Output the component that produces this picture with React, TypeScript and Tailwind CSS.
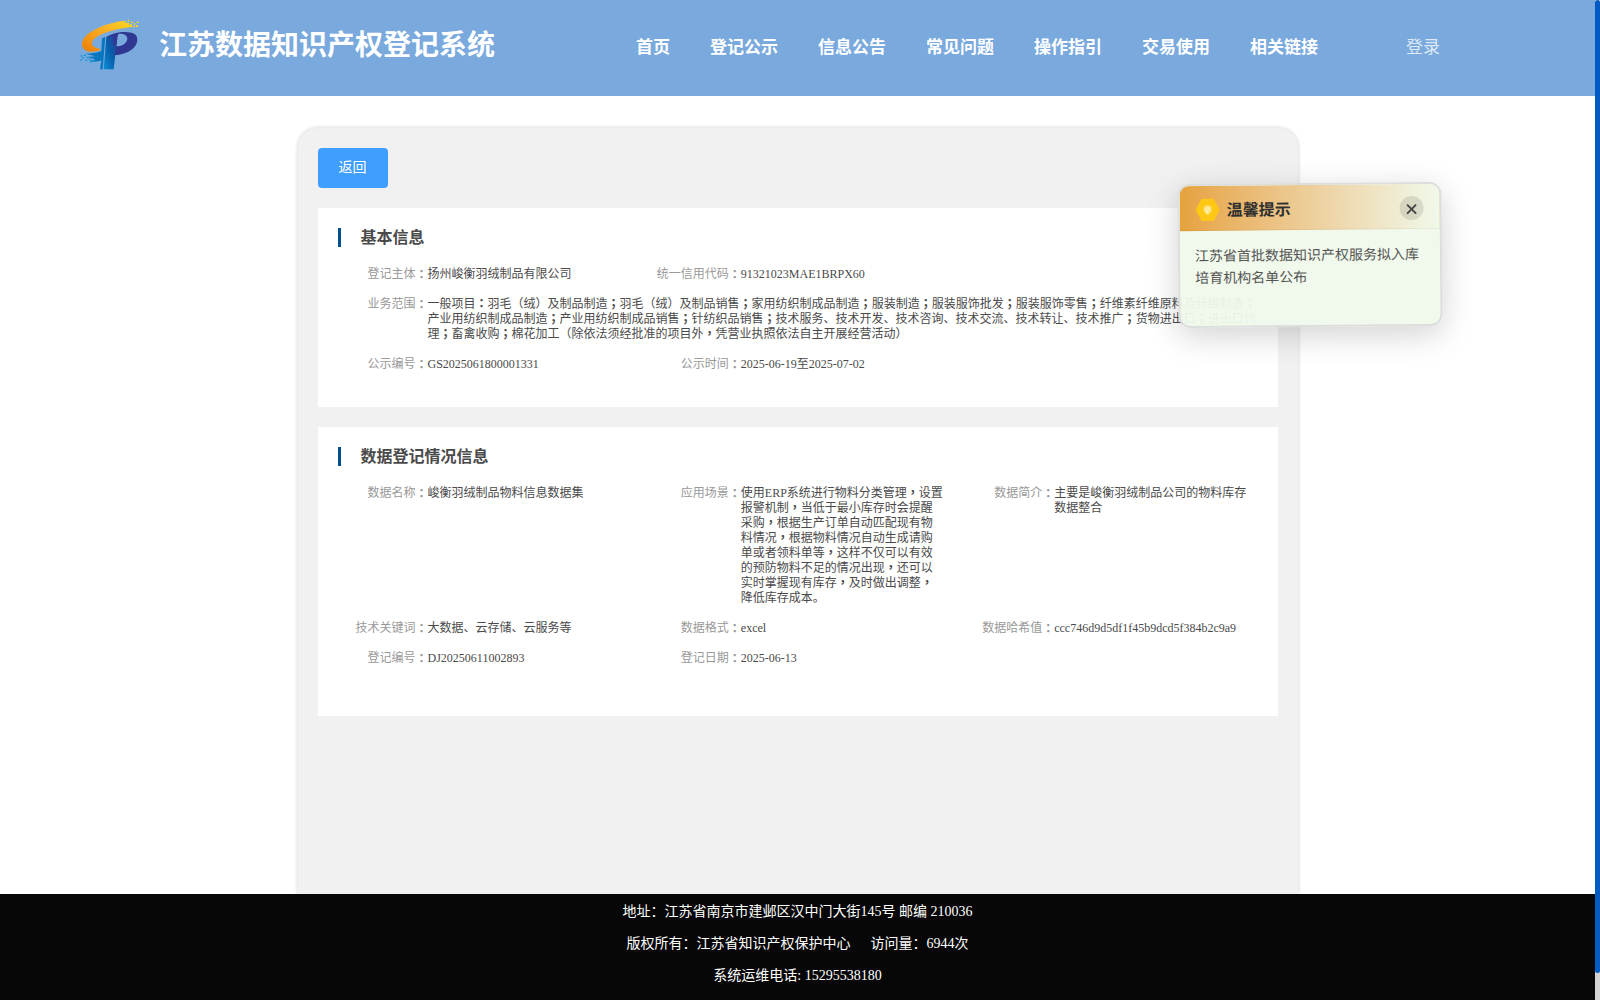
import React from "react";
import { X } from "lucide-react";

const nav = ["首页", "登记公示", "信息公告", "常见问题", "操作指引", "交易使用", "相关链接"];

type Item = { label: string; lines: string[]; wide?: boolean; endsRow?: boolean };

const basic: Item[] = [
  { label: "登记主体", lines: ["扬州峻衡羽绒制品有限公司"] },
  { label: "统一信用代码", lines: ["91321023MAE1BRPX60"], endsRow: true },
  {
    label: "业务范围",
    wide: true,
    lines: [
      "一般项目：羽毛（绒）及制品制造；羽毛（绒）及制品销售；家用纺织制成品制造；服装制造；服装服饰批发；服装服饰零售；纤维素纤维原料及纤维制造；",
      "产业用纺织制成品制造；产业用纺织制成品销售；针纺织品销售；技术服务、技术开发、技术咨询、技术交流、技术转让、技术推广；货物进出口；进出口代",
      "理；畜禽收购；棉花加工（除依法须经批准的项目外，凭营业执照依法自主开展经营活动）",
    ],
  },
  { label: "公示编号", lines: ["GS2025061800001331"] },
  { label: "公示时间", lines: ["2025-06-19至2025-07-02"] },
];

const registration: Item[] = [
  { label: "数据名称", lines: ["峻衡羽绒制品物料信息数据集"] },
  {
    label: "应用场景",
    lines: [
      "使用ERP系统进行物料分类管理，设置",
      "报警机制，当低于最小库存时会提醒",
      "采购，根据生产订单自动匹配现有物",
      "料情况，根据物料情况自动生成请购",
      "单或者领料单等，这样不仅可以有效",
      "的预防物料不足的情况出现，还可以",
      "实时掌握现有库存，及时做出调整，",
      "降低库存成本。",
    ],
  },
  { label: "数据简介", lines: ["主要是峻衡羽绒制品公司的物料库存", "数据整合"] },
  { label: "技术关键词", lines: ["大数据、云存储、云服务等"] },
  { label: "数据格式", lines: ["excel"] },
  { label: "数据哈希值", lines: ["ccc746d9d5df1f45b9dcd5f384b2c9a9"] },
  { label: "登记编号", lines: ["DJ20250611002893"] },
  { label: "登记日期", lines: ["2025-06-13"] },
];

/* Colons, commas and semicolons sit in the middle of their cell. */
function Text({ children }: { children: string }) {
  return (
    <>
      {children.split(/([：；，]+)/).map((part, i) =>
        i % 2 ? (
          <span key={i} lang="zh-TW" className="font-['Noto_Sans_CJK_TC',sans-serif] leading-[0] font-bold">
            {part}
          </span>
        ) : (
          part
        ),
      )}
    </>
  );
}

function Section({ title, items, className }: { title: string; items: Item[]; className: string }) {
  return (
    <section className={`bg-white pt-5 pl-5 ${className}`}>
      <h2 className="flex h-[19px] items-center border-l-3 border-[#00508f] pl-5 text-[16px] font-bold text-[#4a4a4a]">
        {title}
      </h2>
      <dl className="mt-5 grid grid-cols-3 gap-y-[15px] text-[12px] leading-[15px] whitespace-nowrap">
        {items.map((item) => (
          <React.Fragment key={item.label}>
            <div className={item.wide ? "col-span-3 flex" : "flex"}>
              <dt className="flex h-[15px] w-[90px] shrink-0 justify-end text-[#999]">
                <span>{item.label}</span>
                <span className="-mt-px w-3 text-center font-['Noto_Sans_CJK_TC',sans-serif] font-bold" lang="zh-TW">
                  ：
                </span>
              </dt>
              <dd className="text-[#4a4a4a]">
                {item.lines.map((line) => (
                  <p key={line} className="h-[15px]">
                    <Text>{line}</Text>
                  </p>
                ))}
              </dd>
            </div>
            {item.endsRow && <div />}
          </React.Fragment>
        ))}
      </dl>
    </section>
  );
}

function Logo() {
  return (
    <svg viewBox="60 58 180 156" className="h-[52px] w-[60px]">
      <defs>
        <linearGradient id="gold" x1="0" y1="1" x2="1" y2="0">
          <stop offset="0" stopColor="#ee7d05" />
          <stop offset="0.6" stopColor="#f9b127" />
          <stop offset="1" stopColor="#fbd91a" />
        </linearGradient>
        <linearGradient id="stem" x1="0" y1="1" x2="1" y2="0">
          <stop offset="0" stopColor="#0a8fd6" />
          <stop offset="0.5" stopColor="#085fab" />
          <stop offset="1" stopColor="#2b3a98" />
        </linearGradient>
      </defs>
      <path
        d="M190 63C120 74 64 104 66 135C68 150 80 157 96 156L118 153L121 147C105 146 95 139 96 130C99 108 150 90 216 82L216 76L208 76L206 70L198 71Z"
        fill="url(#gold)"
      />
      <path
        d="M194 63h5v4h-5zM204 60h5v4h-5zM201 68h6v5h-6zM212 66h6v4h-6zM209 74h7v5h-7zM220 71h6v4h-6zM230 66h6v4h-6zM218 79h6v4h-6zM227 77h7v5h-7z"
        fill="#f7d51c"
      />
      <path
        d="M126 116L136 111L128 209L120 209L124 182C114 187 102 187 88 185L106 179L82 172L106 170L76 162C94 162 112 160 124 154Z"
        fill="#0877c0"
      />
      <path
        d="M62 167h6v4h-6zM72 165h6v4h-6zM67 173h6v4h-6zM79 171h7v5h-7zM61 179h5v4h-5zM76 180h6v4h-6zM87 177h7v5h-7zM90 184h6v4h-6zM99 182h6v4h-6z"
        fill="#1795d6"
      />
      <path d="M139 112L163 103L170 134L161 207Q161 209 159 209L131 209Z" fill="url(#stem)" />
      <path
        d="M139 112C162 97 205 91 225 104C240 117 230 145 205 156C190 163 176 166 164 166L168 140C190 139 201 129 202 117C202 107 192 101 176 102Q172 106 170 136L160 136L159 110Z"
        fill="#303892"
      />
    </svg>
  );
}

function Notice() {
  return (
    <aside className="absolute top-[183px] left-[1178px] h-[144px] w-[264px] -rotate-[0.5deg] overflow-hidden rounded-xl border-2 border-[#dcdddd] bg-[#f0f9eb]/95 shadow-[0_8px_32px_rgba(0,0,0,0.18)]">
      <header className="flex h-[45px] items-center border-b border-black/5 bg-linear-to-r from-[#e6a23c] to-[#f0f9eb] px-4 pt-1">
        <svg viewBox="0 0 24 24" className="size-6">
          <path d="M6 1h12l6 11-6 11H6L0 12Z" fill="#ffc815" />
          <circle cx="12" cy="11.5" r="4" fill="#ffe68a" />
          <path d="M10.2 10.5l1.8 2 1.8-2M12 12.5v2.5M10.5 16h3" fill="none" stroke="#fff6d0" strokeWidth="0.9" />
        </svg>
        <h3 className="mt-0.5 ml-[7px] flex-1 text-[16px] font-bold text-[#303030]">温馨提示</h3>
        <button className="flex size-6 items-center justify-center rounded-full bg-black/10 text-[#444]">
          <X size={16} strokeWidth={2.8} className="mt-0.5" />
        </button>
      </header>
      <p className="px-[15px] pt-[15px] text-[14px] leading-[22.4px] whitespace-nowrap text-[#555]">
        江苏省首批数据知识产权服务拟入库
        <br />
        培育机构名单公布
      </p>
    </aside>
  );
}

export default function App() {
  return (
    <div
      lang="zh-CN"
      className="relative flex h-[1000px] w-[1600px] overflow-hidden bg-white font-['Liberation_Serif','Noto_Sans_CJK_SC',sans-serif] [text-spacing-trim:space-all]"
    >
      <div className="flex w-[1595px] flex-col">
        <header className="flex h-24 shrink-0 items-center bg-[#79a9dd] pl-20 text-white">
          <div className="-mt-1.5">
            <Logo />
          </div>
          <h1 className="-mt-1 ml-[19px] w-[477px] text-[28px] leading-10 font-bold">江苏数据知识产权登记系统</h1>
          <nav className="flex gap-10 text-[17px] font-bold">
            {nav.map((n) => (
              <a key={n}>{n}</a>
            ))}
          </nav>
          <a className="ml-[88px] text-[17px] text-white/75">登录</a>
        </header>

        <main className="mx-auto mt-8 w-[1000px] flex-1 rounded-t-[20px] bg-[#f1f1f1] px-5 pt-5 shadow-[0_0_4px_rgba(0,0,0,0.2)]">
          <button className="block h-10 w-[70px] rounded-[4px] bg-[#409eff] pb-px text-[14px] text-white">返回</button>
          <Section title="基本信息" items={basic} className="mt-5 h-[199px]" />
          <Section title="数据登记情况信息" items={registration} className="mt-5 h-[289px]" />
        </main>

        <footer className="relative h-[106px] shrink-0 bg-[#070707] pt-0.5 text-center text-[14px] leading-8 text-white">
          <p>地址：江苏省南京市建邺区汉中门大街145号 邮编 210036</p>
          <p>
            版权所有：江苏省知识产权保护中心<span className="ml-5">访问量：6944次</span>
          </p>
          <p>系统运维电话: 15295538180</p>
        </footer>
      </div>
      <div className="h-full w-[5px] bg-[#d3d3d3]">
        <div className="h-[973px] rounded-full bg-[#005bc2]" />
      </div>
      <Notice />
    </div>
  );
}
